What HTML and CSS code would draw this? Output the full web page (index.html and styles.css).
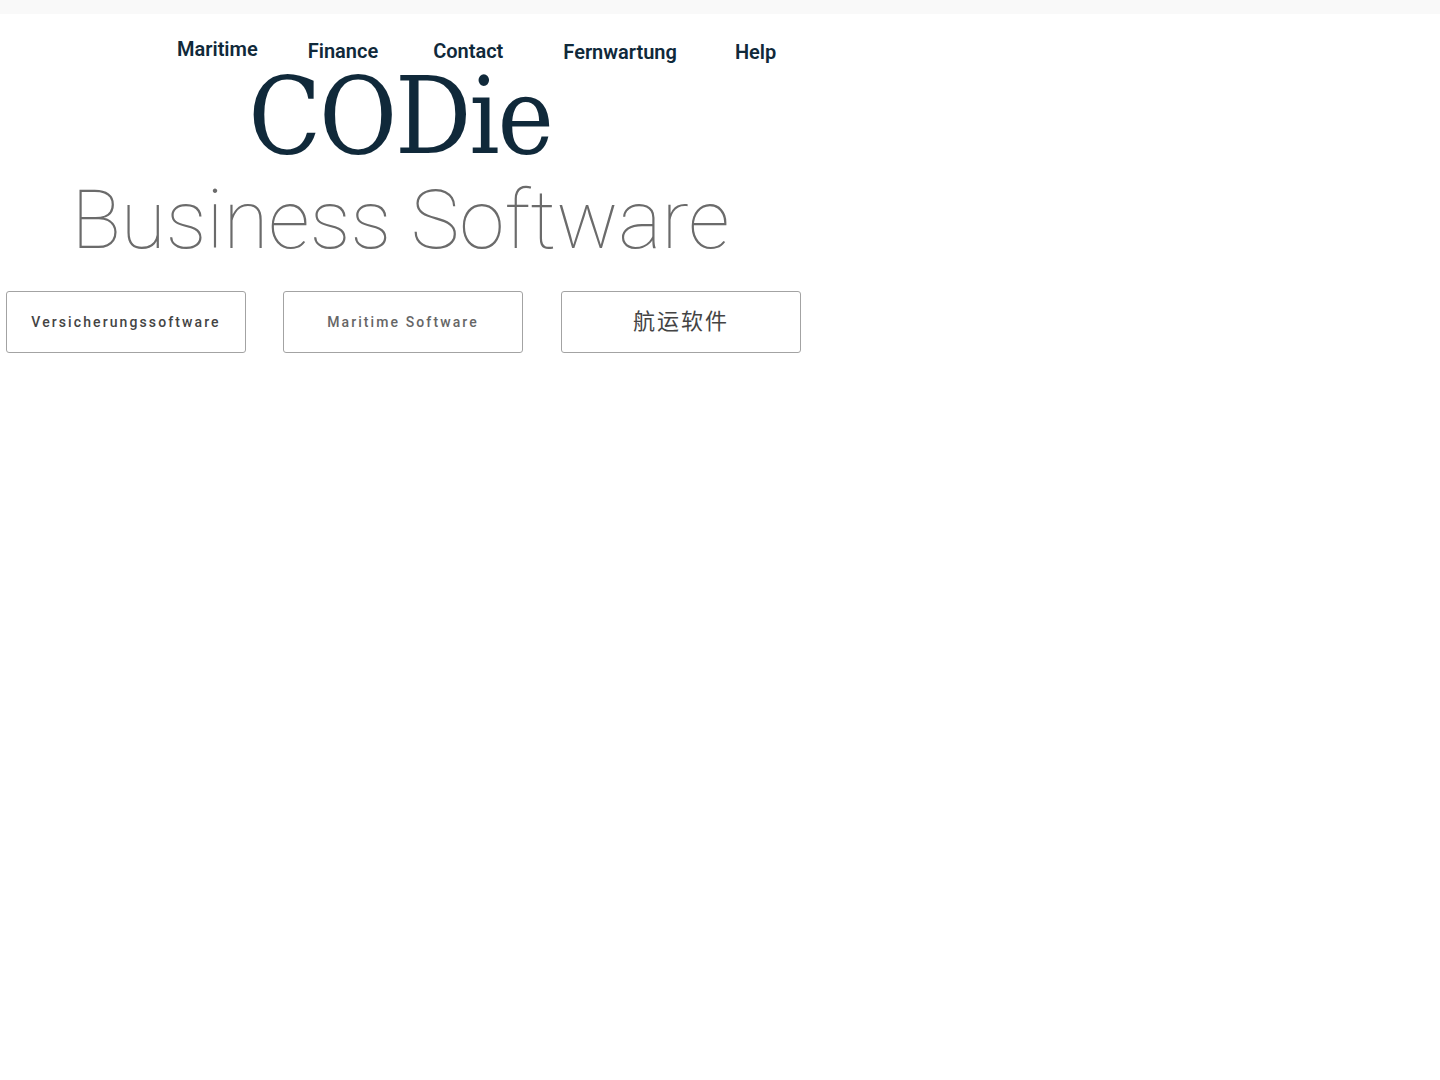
FILE: index.html
```html
<!DOCTYPE html>
<html lang="de">
<head>
<meta charset="utf-8">
<title>CODie Business Software</title>
<link rel="stylesheet" href="styles.css">
</head>
<body>
<div class="topbar"></div>
<div class="page">
  <nav class="nav">
    <a class="nav-item nav-maritime" href="#">Maritime</a>
    <a class="nav-item nav-finance" href="#">Finance</a>
    <a class="nav-item nav-contact" href="#">Contact</a>
    <a class="nav-item nav-fern" href="#">Fernwartung</a>
    <a class="nav-item nav-help" href="#">Help</a>
  </nav>
  <h1 class="logo">CODie</h1>
  <h2 class="tagline">Business Software</h2>
  <div class="buttons">
    <a class="btn" href="#">Versicherungssoftware</a>
    <a class="btn btn-light" href="#">Maritime Software</a>
    <a class="btn btn-cjk" href="#">航运软件</a>
  </div>
</div>
</body>
</html>
```
FILE: styles.css
```css
html, body {
  margin: 0;
  padding: 0;
  background: #ffffff;
}
body {
  font-family: Roboto, "Liberation Sans", sans-serif;
}
.topbar {
  height: 14px;
  background: #f9f9f9;
}
.page {
  width: 807px;
}
.nav {
  display: flex;
  align-items: flex-start;
  height: 44px;
  box-sizing: border-box;
  padding-top: 23px;
  padding-left: 177px;
}
.nav-item {
  font-family: Roboto, "Liberation Sans", sans-serif;
  font-size: 20px;
  font-weight: 600;
  line-height: 24px;
  color: #10293a;
  text-decoration: none;
}
.nav-finance { margin-left: 50px; margin-top: 2px; }
.nav-contact { margin-left: 55px; margin-top: 2px; }
.nav-fern { margin-left: 60px; margin-top: 3px; }
.nav-help { margin-left: 58px; margin-top: 3px; }
.logo {
  margin: 9px 0 0 0;
  padding-right: 7px;
  text-align: center;
  font-family: "DejaVu Serif Condensed", "DejaVu Serif", serif;
  font-stretch: condensed;
  font-weight: 400;
  font-size: 106px;
  line-height: 100px;
  letter-spacing: -2.2px;
  color: #10293a;
}
.tagline {
  margin: 12px 0 0 0;
  padding-right: 6px;
  text-align: center;
  font-family: Roboto, "Liberation Sans", sans-serif;
  font-weight: 100;
  font-size: 82px;
  line-height: 82px;
  color: #6b6b6b;
}
.buttons {
  display: flex;
  gap: 37px;
  margin-top: 30px;
  padding-left: 6px;
}
.btn {
  display: flex;
  align-items: center;
  justify-content: center;
  width: 240px;
  height: 62px;
  box-sizing: border-box;
  border: 1px solid #a3a3a3;
  border-radius: 3px;
  font-family: Roboto, "Liberation Sans", sans-serif;
  font-size: 14px;
  font-weight: 500;
  letter-spacing: 2.1px;
  color: #444444;
  text-decoration: none;
}
.btn-light {
  color: #666666;
}
.btn-cjk {
  margin-left: 1px;
  padding-bottom: 6px;
  font-family: "Noto Sans CJK SC", sans-serif;
  font-size: 22px;
  font-weight: 400;
  letter-spacing: 2px;
  color: #444444;
}
```
